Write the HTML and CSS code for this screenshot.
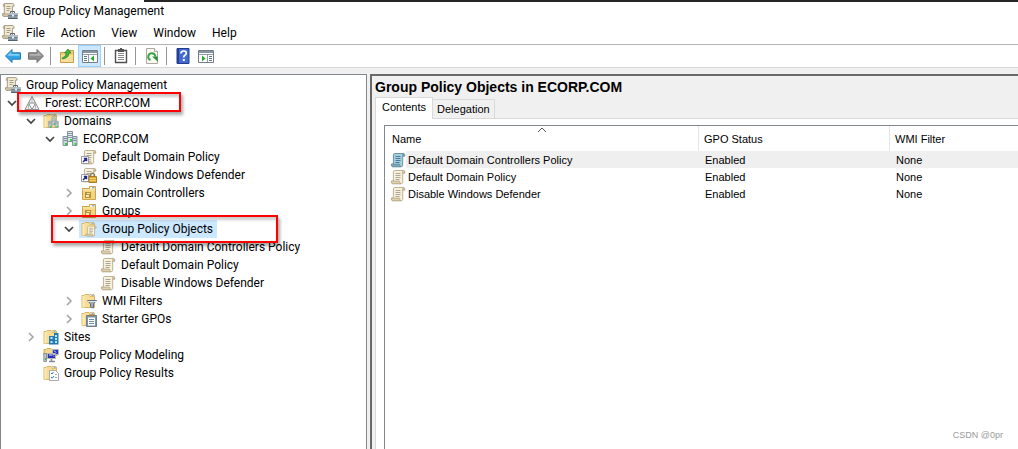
FILE: index.html
```html
<!DOCTYPE html>
<html lang="en">
<head>
<meta charset="utf-8">
<meta name="viewport" content="width=device-width, initial-scale=1">
<title>Group Policy Management</title>
<link rel="stylesheet" href="styles.css">
</head>
<body>
<svg class="sprite" aria-hidden="true">
  <symbol id="scroll" viewBox="0 0 16 16">
    <path d="M4.5 1.5h9.2q1.3.3 1 2.6h-2v9.2q-.2 1.4-1.5 1.4H2.6q-1.6-.3-1.2-2.6h2V3q0-1.3 1.1-1.5z" fill="#f9f1d8" stroke="#b5aa90" stroke-width=".9"/>
    <path d="M13.7 1.5q1.3.3 1 2.6h-2V2.6q.1-1 1-1.1zM1.4 12.1h8.3q-.2 2.3 1.3 2.6H2.6q-1.6-.3-1.2-2.6z" fill="#ddd0aa" stroke="#b0a486" stroke-width=".7"/>
    <path d="M5.5 4.5h5M5.5 6.5h5M5.5 8.5h5M5.5 10.5h4" stroke="#aaa69e"/>
  </symbol>
  <symbol id="scroll-blue" viewBox="0 0 16 16">
    <path d="M4.5 1.5h9.2q1.3.3 1 2.6h-2v9.2q-.2 1.4-1.5 1.4H2.6q-1.6-.3-1.2-2.6h2V3q0-1.3 1.1-1.5z" fill="#a5cfdd" stroke="#6d94a1"/>
    <path d="M13.7 1.5q1.3.3 1 2.6h-2V2.6q.1-1 1-1.1zM1.4 12.1h8.3q-.2 2.3 1.3 2.6H2.6q-1.6-.3-1.2-2.6z" fill="#78a7b8" stroke="#6d94a1" stroke-width=".8"/>
    <path d="M5.5 4.5h5M5.5 6.5h5M5.5 8.5h5M5.5 10.5h4" stroke="#4b7da0"/>
  </symbol>
  <symbol id="console" viewBox="0 0 16 16">
    <path d="M2.3.6h8.6q1.5.4 1.2 2.6h-1.7v10.2H1.6Q.2 13 .6 10.8h1.7V3Q2 1 2.3.6z" fill="#f4ead0" stroke="#a39b88"/>
    <path d="M2.3.6Q1 1 1.2 3.3h1.6zM.6 10.8h6v2.6h-5Q.2 13 .6 10.8z" fill="#d3c6a2" stroke="#a39b88" stroke-width=".7"/>
    <path d="M4.5 3.5h4M4.5 5.5h4M4.5 7.5h3" stroke="#a29d95"/>
    <path d="M8.5 10V8.5h4V10" fill="none" stroke="#59636b"/>
    <path d="M6 10h9.6v5.5H6z" fill="#8797a3"/>
    <path d="M6 10h9.6v2H6z" fill="#aebcc6"/>
    <path d="M6 12.5h9.6" stroke="#71808b"/><path d="M6 15.5h9.6" stroke="#53616c"/>
    <path d="M10 11.5h2v2h-2z" fill="#e9edf0"/>
  </symbol>
  <symbol id="folder" viewBox="0 0 16 16">
    <path d="M1 2.5h2l1-1h4l1 1h4.5v12H1z" fill="#f7dd95" stroke="#d8b566"/>
    <path d="M9 1.5h4v2H9z" fill="#fff" stroke="#d1aa55" stroke-width=".7"/>
    <path d="M10.5 2.4h2" stroke="#6ba7d8"/>
    <path d="M1.5 3h2v11.5h-2z" fill="#fbeab8"/>
  </symbol>
  <symbol id="ou" viewBox="0 0 16 16">
    <path d="M1.5 3.5h7v-2h6v13h-13z" fill="#f3d57f" stroke="#cba44d"/>
    <path d="M9 2h5v2H9z" fill="#fff6da"/><path d="M11 2.8h2.5" stroke="#4d94cc"/>
    <path d="M2 5h12" stroke="#fbeab5"/>
    <path d="M4 7h6v6H4z" fill="#b3913f"/><path d="M6 8h3v1H6zM5 10h3v2H5z" fill="#f8e9ac"/>
  </symbol>
  <symbol id="servers" viewBox="0 0 16 16">
    <path d="M5.5.5h5v10h-5z" fill="#dbe4ea" stroke="#84939d"/>
    <path d="M6 2.5h4M6 4.5h4M6 6.5h4" stroke="#8b9ba6"/>
    <path d="M1 5.5h4.5v9H1zM10.5 5.5H15v9h-4.5z" fill="#cbd6dd" stroke="#84939d"/>
    <path d="M1.5 7.5H5M1.5 9.5H5M11 7.5h3.5M11 9.5h3.5" stroke="#8294a0"/>
    <path d="M8 8h2v2H8zM3 12h2v2H3zM12.5 12h2v2h-2z" fill="#25d52d"/>
  </symbol>
  <symbol id="domains" viewBox="0 0 16 16">
    <use href="#folder"/><use href="#servers" x="5" y="4" width="11" height="12"/>
  </symbol>
  <symbol id="forest" viewBox="0 0 16 16">
    <path d="M8 1.5 1 14.5h14zM4.5 8h7L8 14.5z" fill="#f2f2f2" stroke="#8c8c8c"/>
    <path d="M8 1.5V8M4.5 8v6.5M11.5 8v6.5" stroke="#a4a4a4" stroke-width=".8"/>
  </symbol>
  <symbol id="link" viewBox="0 0 16 16">
    <use href="#scroll"/>
    <path d="M.5 7.5h7v7h-7z" fill="#fff" stroke="#9a9a9a"/>
    <path d="M2 13l3-3M2.8 9.5h2.7v2.8" fill="none" stroke="#25238c" stroke-width="1.5"/>
  </symbol>
  <symbol id="link-lock" viewBox="0 0 16 16">
    <use href="#link"/>
    <path d="M9.5 10V7.5q2.5-2.5 4 0V10" fill="none" stroke="#8b7d54" stroke-width="1.3"/>
    <path d="M8 9.5h7.5v6H8z" fill="#dca52b" stroke="#9e6d12" stroke-width=".8"/>
    <path d="M8.5 11.5h6.5M8.5 13.5h6.5" stroke="#f5d36b"/>
  </symbol>
  <symbol id="gpos" viewBox="0 0 16 16">
    <use href="#folder"/><use href="#scroll" x="4" y="4" width="12" height="12"/>
  </symbol>
  <symbol id="filters" viewBox="0 0 16 16">
    <use href="#folder"/>
    <path d="M6.5 7.5h9L12.5 11v4l-3-1v-3z" fill="#9eabb8" stroke="#657482"/>
    <path d="M7 8.5h8" stroke="#dfe7ed"/>
  </symbol>
  <symbol id="starter" viewBox="0 0 16 16">
    <use href="#folder"/>
    <path d="M5.5 4.5h10v11h-10z" fill="#7599b5" stroke="#757d86"/>
    <path d="M7 6.5h7v8H7z" fill="#fff"/><path d="M8 3.5h5v2H8z" fill="#9e7a54"/>
    <path d="M8 8.5h5M8 10.5h5M8 12.5h5" stroke="#6b8ba7"/>
  </symbol>
  <symbol id="sites" viewBox="0 0 16 16">
    <use href="#folder"/>
    <path d="M6 7h5V4h4.5v11.5H6z" fill="#2579b4"/>
    <path d="M7.5 8h2v2h-2zM12 6h2v2h-2zM12 9h2v2h-2zM7.5 12h2v2h-2zM12 12h2v2h-2z" fill="#b9e9ff"/>
  </symbol>
  <symbol id="modeling" viewBox="0 0 16 16">
    <path d="M1 2.5h2l1-1h4l1 1h5v6H1z" fill="#f5d98b" stroke="#d1aa55"/>
    <path d="M9.5 2.5h6v5h-6zM4.5 6.5h8v5h-8z" fill="#2630b8" stroke="#b4b7b9"/>
    <path d="M11 3.5l2 2M6 8h3M10 8.5l1 1" stroke="#edf1ff"/>
    <path d="M8.5 12v2.5M6 14.5h6" stroke="#858b91" stroke-width="1.5"/>
    <path d="M.8 6.5h2.7v8H.8z" fill="#c4c9cc" stroke="#777d83" stroke-width=".8"/><path d="M2 11h1v2H2z" fill="#28c239"/>
  </symbol>
  <symbol id="results" viewBox="0 0 16 16">
    <use href="#folder"/>
    <path d="M6.5 5.5h6l3 3v7h-9z" fill="#fff" stroke="#a5abb0"/>
    <path d="M8 8l1 1 1.5-2M8 12l1.2 1.2L11 11" fill="none" stroke="#2478b8"/><path d="M12 9.5h2M12 12.5h2" stroke="#9aa8b3"/>
  </symbol>
  <symbol id="back" viewBox="0 0 16 16">
    <path d="M.5 8 7 1.5v3.3h8.5v6.4H7v3.3z" fill="#2fa3e6" stroke="#2b78a8"/><path d="M2.2 7.8 6.2 3.8v2.2h8.2v1.8z" fill="#82d0f7"/>
  </symbol>
  <symbol id="forward" viewBox="0 0 16 16">
    <path d="M15.5 8 9 1.5v3.3H.5v6.4H9v3.3z" fill="#8d8d8d" stroke="#707070"/><path d="M13.8 7.8 9.8 3.8v2.2H1.6v1.8z" fill="#b3b3b3"/>
  </symbol>
  <symbol id="up" viewBox="0 0 16 16">
    <path d="M1.5 4.5h8l1-2h4v12h-13z" fill="#f0cf77" stroke="#c59d4c"/><path d="M2 7h12v7H2z" fill="#f8df9c"/>
    <path d="M3 10q4-1 4.4-5H5.5L9 1l3 4h-2q0 5-6.5 6z" fill="#42b63c" stroke="#218327" stroke-width=".7"/>
  </symbol>
  <symbol id="tree-pane" viewBox="0 0 16 16">
    <path d="M.5 2.5h15v12H.5z" fill="#fff" stroke="#737f88"/><path d="M1 3h14v2H1z" fill="#8796a1"/>
    <path d="M1 6.5h14M6.5 7v7" stroke="#909ca5"/><path d="M2 8.5h3M2 10.5h3M2 12.5h3" stroke="#5d7990"/><path d="M12 7.5v6L8.5 10.5z" fill="#28a62b"/>
  </symbol>
  <symbol id="action-pane" viewBox="0 0 16 16">
    <path d="M.5 2.5h15v12H.5z" fill="#fff" stroke="#737f88"/><path d="M1 3h14v2H1z" fill="#8796a1"/>
    <path d="M1 6.5h14M9.5 7v7" stroke="#909ca5"/><path d="M11 8.5h3M11 10.5h3M11 12.5h3" stroke="#5d7990"/><path d="M4 7.5v6l3.5-3z" fill="#28a62b"/>
  </symbol>
  <symbol id="clipboard" viewBox="0 0 16 16">
    <path d="M2.5 2.5h11v12h-11z" fill="#fff" stroke="#505050" stroke-width="1.4"/><path d="M5 1h2V0h2v1h2v3H5z" fill="#555"/>
    <path d="M5 5.5h6M5 7.5h6M5 9.5h6M5 11.5h6" stroke="#898989"/>
  </symbol>
  <symbol id="refresh" viewBox="0 0 16 16">
    <path d="M2.5.5h8l3 3v12h-11z" fill="#f8f8ef" stroke="#aaa9a0"/><path d="M10.5.5v3h3" fill="#fff" stroke="#aaa9a0"/>
    <path d="M6.5 12.2A3.6 3.6 0 1 1 11.4 8.5" fill="none" stroke="#35a548" stroke-width="1.9"/><path d="M8.2 8.5h5.4v5z" fill="#258b39"/>
  </symbol>
  <symbol id="help" viewBox="0 0 16 16">
    <path d="M2 .5h12v15H2z" fill="#426bd1" stroke="#233b8d"/><path d="M2 1h2v14H2z" fill="#263e95"/>
    <path d="M6 5.5q0-2.5 2.6-2.5 2.9 0 2.7 2.3-.1 1.2-1.4 2-1.2.8-1.2 2.2" fill="none" stroke="#fff" stroke-width="1.7"/><path d="M7.8 11h2v2h-2z" fill="#fff"/>
  </symbol>
  <symbol id="open" viewBox="0 0 10 10"><path d="M1 3l4 4 4-4" fill="none" stroke="#444" stroke-width="1.7"/></symbol>
  <symbol id="closed" viewBox="0 0 10 10"><path d="M3 1l4 4-4 4" fill="none" stroke="#a3a3a3" stroke-width="1.5"/></symbol>
</svg>

<header class="titlebar">
  <svg class="icon"><use href="#console"/></svg>
  <h1>Group Policy Management</h1>
</header>
<nav class="menubar" aria-label="Main menu">
  <svg class="icon"><use href="#console"/></svg>
  <button type="button">File</button>
  <button type="button">Action</button>
  <button type="button">View</button>
  <button type="button">Window</button>
  <button type="button">Help</button>
</nav>
<div class="toolbar" role="toolbar" aria-label="Tools">
  <button type="button" aria-label="Back"><svg class="icon"><use href="#back"/></svg></button>
  <button type="button" aria-label="Forward"><svg class="icon"><use href="#forward"/></svg></button>
  <span class="divider"></span>
  <button type="button" aria-label="Up one level"><svg class="icon"><use href="#up"/></svg></button>
  <button type="button" class="pressed" aria-pressed="true" aria-label="Show console tree"><svg class="icon"><use href="#tree-pane"/></svg></button>
  <span class="divider"></span>
  <button type="button" aria-label="Paste"><svg class="icon"><use href="#clipboard"/></svg></button>
  <span class="divider"></span>
  <button type="button" aria-label="Refresh"><svg class="icon"><use href="#refresh"/></svg></button>
  <span class="divider"></span>
  <button type="button" aria-label="Help"><svg class="icon"><use href="#help"/></svg></button>
  <button type="button" aria-label="Show action pane"><svg class="icon"><use href="#action-pane"/></svg></button>
</div>

<main class="workspace">
  <nav class="tree" aria-label="Console tree">
    <div class="node root"><svg class="icon"><use href="#console"/></svg><span class="label">Group Policy Management</span></div>
    <ul>
      <li>
        <div class="node"><button type="button" class="toggle" aria-label="Collapse Forest"><svg><use href="#open"/></svg></button><svg class="icon"><use href="#forest"/></svg><span class="label">Forest: ECORP.COM</span><span class="mark mark-forest"></span></div>
        <ul>
          <li>
            <div class="node"><button type="button" class="toggle" aria-label="Collapse Domains"><svg><use href="#open"/></svg></button><svg class="icon"><use href="#domains"/></svg><span class="label">Domains</span></div>
            <ul>
              <li>
                <div class="node"><button type="button" class="toggle" aria-label="Collapse ECORP.COM"><svg><use href="#open"/></svg></button><svg class="icon"><use href="#servers"/></svg><span class="label">ECORP.COM</span></div>
                <ul>
                  <li class="node leaf"><svg class="icon"><use href="#link"/></svg><span class="label">Default Domain Policy</span></li>
                  <li class="node leaf"><svg class="icon"><use href="#link-lock"/></svg><span class="label">Disable Windows Defender</span></li>
                  <li class="node"><button type="button" class="toggle" aria-label="Expand Domain Controllers"><svg><use href="#closed"/></svg></button><svg class="icon"><use href="#ou"/></svg><span class="label">Domain Controllers</span></li>
                  <li class="node"><button type="button" class="toggle" aria-label="Expand Groups"><svg><use href="#closed"/></svg></button><svg class="icon"><use href="#ou"/></svg><span class="label">Groups</span></li>
                  <li>
                    <div class="node selected"><button type="button" class="toggle" aria-label="Collapse Group Policy Objects"><svg><use href="#open"/></svg></button><svg class="icon"><use href="#gpos"/></svg><span class="label">Group Policy Objects</span><span class="mark mark-objects"></span></div>
                    <ul>
                      <li class="node leaf"><svg class="icon"><use href="#scroll"/></svg><span class="label">Default Domain Controllers Policy</span></li>
                      <li class="node leaf"><svg class="icon"><use href="#scroll"/></svg><span class="label">Default Domain Policy</span></li>
                      <li class="node leaf"><svg class="icon"><use href="#scroll"/></svg><span class="label">Disable Windows Defender</span></li>
                    </ul>
                  </li>
                  <li class="node"><button type="button" class="toggle" aria-label="Expand WMI Filters"><svg><use href="#closed"/></svg></button><svg class="icon"><use href="#filters"/></svg><span class="label">WMI Filters</span></li>
                  <li class="node"><button type="button" class="toggle" aria-label="Expand Starter GPOs"><svg><use href="#closed"/></svg></button><svg class="icon"><use href="#starter"/></svg><span class="label">Starter GPOs</span></li>
                </ul>
              </li>
            </ul>
          </li>
          <li class="node"><button type="button" class="toggle" aria-label="Expand Sites"><svg><use href="#closed"/></svg></button><svg class="icon"><use href="#sites"/></svg><span class="label">Sites</span></li>
          <li class="node leaf"><svg class="icon"><use href="#modeling"/></svg><span class="label">Group Policy Modeling</span></li>
          <li class="node leaf"><svg class="icon"><use href="#results"/></svg><span class="label">Group Policy Results</span></li>
        </ul>
      </li>
    </ul>
  </nav>

  <section class="details">
    <h2>Group Policy Objects in ECORP.COM</h2>
    <div class="tabs" role="tablist">
      <button type="button" role="tab" class="tab active" aria-selected="true">Contents</button>
      <button type="button" role="tab" class="tab" aria-selected="false">Delegation</button>
    </div>
    <div class="page" role="tabpanel">
      <div class="list">
        <table>
          <colgroup><col class="col-name"><col class="col-status"><col></colgroup>
          <thead>
            <tr><th>Name<svg class="sort" viewBox="0 0 10 6"><path d="M1 5l4-4 4 4" fill="none" stroke="#555"/></svg></th><th>GPO Status</th><th>WMI Filter</th></tr>
          </thead>
          <tbody>
            <tr class="current"><td><span class="item"><svg class="icon"><use href="#scroll-blue"/></svg>Default Domain Controllers Policy</span></td><td>Enabled</td><td>None</td></tr>
            <tr><td><span class="item"><svg class="icon"><use href="#scroll"/></svg>Default Domain Policy</span></td><td>Enabled</td><td>None</td></tr>
            <tr><td><span class="item"><svg class="icon"><use href="#scroll"/></svg>Disable Windows Defender</span></td><td>Enabled</td><td>None</td></tr>
          </tbody>
        </table>
        <p class="credit">CSDN @0pr</p>
      </div>
    </div>
  </section>
</main>
</body>
</html>
```
FILE: styles.css
```css
* { box-sizing: border-box; }

body {
  margin: 0;
  min-height: 100vh;
  display: flex;
  flex-direction: column;
  background: #f0f0f0;
  color: #000;
  font: 12px/18px Roboto, "Open Sans", sans-serif;
}

button {
  margin: 0;
  padding: 0;
  border: 0;
  background: none;
  color: inherit;
  font: inherit;
}

h1, h2, p, ul { margin: 0; padding: 0; }
ul { list-style: none; }

.sprite { position: absolute; width: 0; height: 0; }
.icon { width: 16px; height: 16px; flex: none; }

.titlebar, .menubar {
  display: flex;
  align-items: center;
  height: 22px;
  padding-left: 2px;
  background: #fff;
}
.titlebar {
  background: linear-gradient(#252525, #252525) 144px 0 / 100% 2px no-repeat #fff;
}
.titlebar h1 { margin-left: 5px; font-size: 12px; font-weight: 400; }
.menubar .icon { margin-right: 8px; }
.menubar button { margin-right: 16px; }

.toolbar {
  display: flex;
  align-items: center;
  height: 24px;
  padding-left: 1px;
  border-top: 1px solid #b5b5b5;
  border-bottom: 1px solid #d9d9d9;
  background: #fff;
}
.toolbar button {
  display: flex;
  align-items: center;
  justify-content: center;
  width: 23px;
  height: 22px;
}
.toolbar .pressed { background: #cce8ff; border: 1px solid #99d1ff; }
.divider { width: 1px; height: 18px; margin: 0 4px 0 3px; background: #969696; }

.workspace {
  flex: 1;
  display: grid;
  grid-template-columns: 367px minmax(0, 1fr);
  gap: 3px;
  padding-top: 6px;
}

.tree {
  padding: 1px 0 8px 4px;
  border: 1px solid #828790;
  border-bottom: 0;
  background: #fff;
}
.tree ul ul { padding-left: 19px; }
.node { position: relative; display: flex; align-items: center; height: 18px; }
.node .label { padding: 0 4px 0 5px; white-space: nowrap; }
.leaf { padding-left: 19px; }
.toggle { display: flex; width: 19px; padding-left: 2px; }
.toggle svg { width: 10px; height: 10px; }
.selected { background: linear-gradient(#cce8ff, #cce8ff) 17px 0 / 138px 100% no-repeat; }

.mark {
  position: absolute;
  z-index: 1;
  border: 2px solid #f00;
  box-shadow: 2px 3px 3px #0005, inset 2px 3px 3px #0003;
}
.mark-forest { left: 12px; top: -2px; width: 164px; height: 20px; }
.mark-objects { left: -11px; top: -5px; width: 227px; height: 28px; }

.details {
  display: flex;
  flex-direction: column;
  min-width: 0;
  padding: 1px 0 0 3px;
  border-top: 2px solid #696969;
  border-left: 2px solid #696969;
  font: 11px/17px "Liberation Sans", Arial, sans-serif;
}
.details h2 { font-size: 14px; line-height: 20px; }
.tabs { display: flex; align-items: flex-end; height: 21px; }
.tab {
  height: 19px;
  padding: 0 4px;
  border: 1px solid #d9d9d9;
  border-bottom: 0;
  border-left: 0;
}
.tab.active {
  z-index: 1;
  height: 22px;
  margin-bottom: -1px;
  padding: 0 6px 2px;
  border-left: 1px solid #d9d9d9;
  background: #fff;
}
.page {
  flex: 1;
  display: flex;
  padding: 6px 0 0 8px;
  border-top: 1px solid #d9d9d9;
  border-left: 1px solid #d9d9d9;
  background: #fff;
}
.list {
  flex: 1;
  display: flex;
  flex-direction: column;
  justify-content: space-between;
  min-width: 0;
  border-top: 1px solid #828790;
  border-left: 1px solid #828790;
}
table { width: 100%; border-spacing: 0; table-layout: fixed; }
.col-name { width: 314px; }
.col-status { width: 191px; }
th {
  position: relative;
  height: 25px;
  padding: 2px 0 0 5px;
  border-right: 1px solid #e5e5e5;
  font-weight: 400;
  text-align: left;
}
th:first-child { padding-left: 7px; }
th:last-child { border-right: 0; }
td { height: 17px; padding: 1px 0 0 6px; line-height: 16px; }
td:first-child { padding-left: 5px; }
.item { display: flex; align-items: center; gap: 2px; }
.current td { background: #efefef; }
.current td:first-child { background: linear-gradient(90deg, #fff 21px, #efefef 21px); }
.sort { position: absolute; left: 50%; top: 1px; width: 10px; height: 6px; margin-left: -5px; }
.credit { padding: 0 15px 5px 0; color: #999; font-size: 9px; line-height: 17px; text-align: right; }
```
